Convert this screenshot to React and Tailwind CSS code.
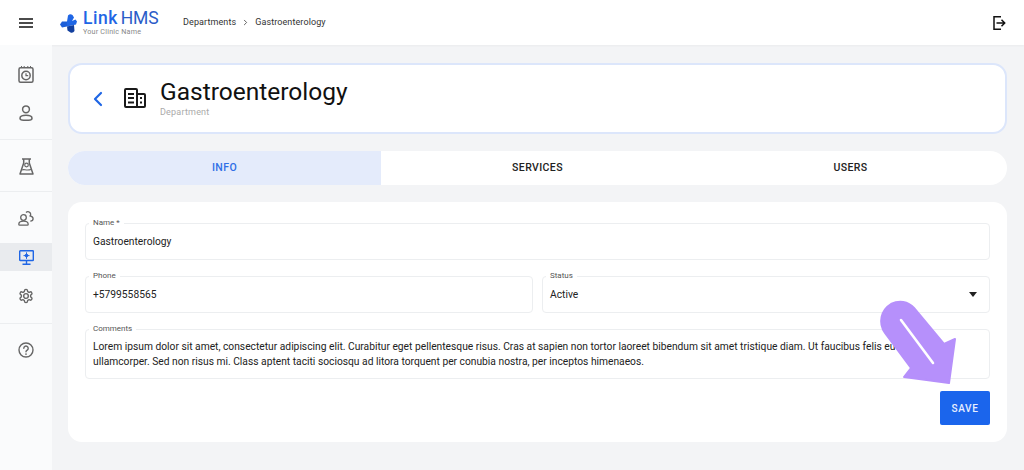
import React from "react";
import { ChevronLeft, ChevronRight } from "lucide-react";

const Logo = () => (
  <svg width="18" height="19" viewBox="0 0 18 19" fill="none">
    <path d="M1 10.500 L3 7.500 L8 7.500 L8 12.500 L3 13.500 Z" fill="#1d5fd8" />
    <path d="M8 7.500 L9 1.500 Q11 -.5 13.500 1 L15 3.500 L13 7 L16.500 5.500 L18 7.500 L17 10.500 L12.500 11.500 L8 12.500 Z" fill="#1f66e5" />
    <path d="M8 12.500 L15 11 L15.500 17 Q14 19.500 11.500 18.500 L8.500 16.500 Z" fill="#123f9e" />
  </svg>
);

const IconMenu = () => (
  <svg width="14" height="10" viewBox="0 0 14 10" stroke="#111" strokeWidth="1.500">
    <path d="M0 1h14M0 5h14M0 9h14" />
  </svg>
);

const IconExit = () => (
  <svg width="13" height="14" viewBox="0 0 13 14" fill="none" stroke="#111" strokeWidth="1.500">
    <path d="M8 .8H1v12.400h7" />
    <path d="M3.500 7h8M8.500 3.800 11.700 7 8.500 10.200" />
  </svg>
);

const IconClock = () => (
  <svg width="16" height="17" viewBox="0 0 16 17" fill="none" stroke="#666" strokeWidth="1.500">
    <rect x="1" y="1.800" width="14" height="14.400" rx="1.500" />
    <circle cx="8" cy="9.500" r="4.200" />
    <path d="M8 7.300v2.400h2.200" strokeWidth="1.200" />
    <path d="M3.500 0v2M6.200 0v2M9.800 0v2M12.500 0v2" strokeWidth="1" />
  </svg>
);

const IconUser = () => (
  <svg width="14" height="16" viewBox="0 0 14 16" fill="none" stroke="#666" strokeWidth="1.500">
    <circle cx="7" cy="4.300" r="3.400" />
    <path d="M4.500 15.200h5c2.300 0 3.500-.8 3.500-2 0-1.800-2.800-3-6-3s-6 1.200-6 3c0 1.200 1.200 2 3.500 2z" />
  </svg>
);

const IconFlask = () => (
  <svg width="15" height="17" viewBox="0 0 15 17" fill="none" stroke="#666" strokeWidth="1.500" strokeLinejoin="round">
    <path d="M3 1h9M4.700 1v4L1 16h13L10.300 5V1" />
    <circle cx="7.500" cy="7" r="1.800" strokeWidth="1.200" />
    <path d="M3 12c2-1.300 4 1 9-.5" strokeWidth="1.200" />
  </svg>
);

const IconPeople = () => (
  <svg width="16" height="16" viewBox="0 0 16 16" fill="none" stroke="#666" strokeWidth="1.300">
    <circle cx="5.500" cy="7.500" r="2.800" />
    <path d="M.8 14.300c0-2.300 2.100-3.100 4.700-3.100s4.700.8 4.700 3.100c0 .5-.3.9-.9.900H1.700c-.6 0-.9-.4-.9-.9z" />
    <path d="M8 2.500a2.800 2.800 0 0 1 4.700 1.600c0 .7-.2 1.200-.6 1.700 1.700.4 3 1.300 3 3 0 1.300-1 2.300-2.800 2.300" />
  </svg>
);

const IconMonitor = () => (
  <svg width="15" height="15" viewBox="0 0 15 15" fill="none" stroke="#1f66e5" strokeWidth="1.400">
    <rect x=".7" y=".7" width="13.600" height="9.800" rx=".6" />
    <path d="M7.500 10.500v3.500M3.500 14.200h8" />
    <circle cx="7.500" cy="5.600" r="1.800" fill="#1f66e5" stroke="none" />
    <path d="M7.500 2.300v6.600M4.500 5.600h6" strokeWidth="1" />
  </svg>
);

const IconGear = () => (
  <svg width="16" height="16" viewBox="0 0 24 24" fill="none" stroke="#666" strokeWidth="2.100" strokeLinejoin="round">
    <path d="M12.200 2h-.4a2 2 0 0 0-2 2v.2a2 2 0 0 1-1 1.700l-.4.300a2 2 0 0 1-2 0l-.2-.1a2 2 0 0 0-2.700.7l-.2.400a2 2 0 0 0 .7 2.700l.2.100a2 2 0 0 1 1 1.700v.6a2 2 0 0 1-1 1.700l-.2.100a2 2 0 0 0-.7 2.700l.2.400a2 2 0 0 0 2.700.7l.2-.1a2 2 0 0 1 2 0l.4.300a2 2 0 0 1 1 1.700v.2a2 2 0 0 0 2 2h.4a2 2 0 0 0 2-2v-.2a2 2 0 0 1 1-1.700l.4-.3a2 2 0 0 1 2 0l.2.100a2 2 0 0 0 2.700-.7l.2-.4a2 2 0 0 0-.7-2.700l-.2-.1a2 2 0 0 1-1-1.700v-.6a2 2 0 0 1 1-1.700l.2-.1a2 2 0 0 0 .7-2.700l-.2-.4a2 2 0 0 0-2.700-.7l-.2.100a2 2 0 0 1-2 0l-.4-.3a2 2 0 0 1-1-1.700V4a2 2 0 0 0-2-2z" />
    <circle cx="12" cy="12" r="3.500" />
  </svg>
);

const IconHelp = () => (
  <svg width="16" height="16" viewBox="0 0 16 16" fill="none" stroke="#666" strokeWidth="1.400" strokeLinecap="round">
    <circle cx="8" cy="8" r="7" />
    <path d="M5.800 6.200a2.200 2.200 0 1 1 3.400 1.900c-.8.500-1.200 1-1.200 1.700" />
    <path d="M8 12v.1" strokeWidth="1.700" />
  </svg>
);

const IconBuilding = () => (
  <svg width="22" height="20" viewBox="0 0 22 20" fill="none" stroke="#1a1a1a" strokeWidth="2">
    <path d="M13 19H2a1 1 0 0 1-1-1V2a1 1 0 0 1 1-1h10a1 1 0 0 1 1 1v17zM13 6h7a1 1 0 0 1 1 1v11a1 1 0 0 1-1 1h-7" />
    <path d="M4 6h6M4 10h6M4 14.500h6M16 10h2M16 14.500h2" strokeWidth="2.200" />
  </svg>
);

const SideItem = ({ children, active }) => (
  <div className={active ? "h-[28px] flex items-center justify-center bg-[#e9ebee]" : "h-[28px] flex items-center justify-center"}>
    {children}
  </div>
);

const Field = ({ label, className, children }) => (
  <div className={`relative border border-[#eceef0] rounded-[4px] px-[7px] ${className}`}>
    <span className="absolute -top-[6px] left-[3px] bg-white px-1 text-[8px] leading-[10px] text-[#555]">{label}</span>
    {children}
  </div>
);

const App = () => {
  return (
    <div className="relative w-[1024px] h-[470px] overflow-hidden bg-[#f3f4f6] font-['Roboto',sans-serif] text-[#222]">
      <header className="h-[45px] bg-white flex items-center shadow-[0_1px_2px_rgba(0,0,0,0.04)]">
        <div className="w-[51px] flex justify-center">
          <IconMenu />
        </div>
        <div className="w-[8px]" />
        <div className="mt-[1px]"><Logo /></div>
        <div className="ml-[6px] w-[100px] flex flex-col">
          <div className="text-[17.500px] leading-[15px] mt-[1px] text-[#1f66e5] whitespace-nowrap">
            <span className="font-medium tracking-[0.5px]">Link</span>
            <span className="ml-[3px] text-[#2a5cc8] tracking-[-0.2px]">HMS</span>
          </div>
          <div className="text-[7.200px] leading-[8px] mt-[2px] text-[#888] tracking-[0.2px] whitespace-nowrap">Your Clinic Name</div>
        </div>
        <nav className="flex items-center text-[9px] text-[#333] tracking-[0.1px]">
          <span>Departments</span>
          <ChevronRight size={9} className="mx-[5px]" />
          <span>Gastroenterology</span>
        </nav>
        <div className="ml-auto mr-[18px]">
          <IconExit />
        </div>
      </header>

      <div className="flex h-[425px]">
        <aside className="w-[52px] bg-[#fafbfc] flex flex-col">
          <div className="h-[95px] pt-[15px] flex flex-col gap-[11px] border-b border-[#eceef0]">
            <SideItem><IconClock /></SideItem>
            <SideItem><IconUser /></SideItem>
          </div>
          <div className="h-[52px] pt-[12px] border-b border-[#eceef0]">
            <SideItem><IconFlask /></SideItem>
          </div>
          <div className="h-[132px] pt-[12px] flex flex-col gap-[11px] border-b border-[#eceef0]">
            <SideItem><IconPeople /></SideItem>
            <SideItem active><IconMonitor /></SideItem>
            <SideItem><IconGear /></SideItem>
          </div>
          <div className="pt-[12px]">
            <SideItem><IconHelp /></SideItem>
          </div>
        </aside>

        <main className="flex-1 pl-[16px] pr-[17px] pt-[18px]">
          <div className="h-[71px] bg-white border-2 border-[#dce6fb] rounded-[14px] flex items-center">
            <ChevronLeft size={24} color="#1f66e5" strokeWidth={2.200} className="ml-[16px]" />
            <div className="ml-[14px] mt-[-1px]"><IconBuilding /></div>
            <div className="ml-[14px] -mt-[3px]">
              <div className="text-[24.500px] leading-[30px] text-[#111]">Gastroenterology</div>
              <div className="text-[9px] leading-[10px] text-[#aaa] tracking-[0.2px]">Department</div>
            </div>
          </div>

          <div className="mt-[17px] h-[34px] flex rounded-[17px] overflow-hidden bg-white text-[10.500px] font-medium tracking-[0.4px]">
            <div className="flex-1 flex items-center justify-center bg-[#e4ebfb] text-[#2f6fe6]">INFO</div>
            <div className="flex-1 flex items-center justify-center text-[#222]">SERVICES</div>
            <div className="flex-1 flex items-center justify-center text-[#222]">USERS</div>
          </div>

          <div className="mt-[17px] h-[240px] bg-white rounded-[14px] px-[17px] pt-[21px] pb-[17px] flex flex-col">
            <Field label="Name *" className="h-[37px] pt-[1px] flex items-center text-[10.250px]">
              Gastroenterology
            </Field>
            <div className="mt-[16px] flex gap-[9px]">
              <Field label="Phone" className="flex-1 h-[37px] pt-[1px] flex items-center text-[10.250px]">
                +5799558565
              </Field>
              <Field label="Status" className="flex-1 h-[37px] pt-[1px] flex items-center justify-between text-[10.250px]">
                Active
                <span className="mr-[5px] w-0 h-0 border-l-[4.500px] border-r-[4.500px] border-t-[5px] border-l-transparent border-r-transparent border-t-[#222]" />
              </Field>
            </div>
            <Field label="Comments" className="mt-[16px] h-[51px] pt-[9px] text-[10.250px] leading-[15px]">
              Lorem ipsum dolor sit amet, consectetur adipiscing elit. Curabitur eget pellentesque risus. Cras at sapien non tortor laoreet bibendum sit amet tristique diam. Ut faucibus felis eu orci
              <br />
              ullamcorper. Sed non risus mi. Class aptent taciti sociosqu ad litora torquent per conubia nostra, per inceptos himenaeos.
            </Field>
            <div className="mt-[12px] flex justify-end">
              <button className="w-[50px] h-[34px] bg-[#1b65ec] text-[#e8efff] rounded-[2px] text-[10px] font-medium tracking-[0.6px]">SAVE</button>
            </div>
          </div>
        </main>
      </div>

      <svg className="absolute left-0 top-0 pointer-events-none" width="1024" height="470" viewBox="0 0 1024 470">
        <path
          d="M891 304 C899 300 908 301 914 308 L944 344 L955 339 L949 383 L904 377 L911 368 L885 333 C878 323 881 310 891 304 Z"
          fill="#b690fb"
          stroke="#b690fb"
          strokeWidth="2"
          strokeLinejoin="round"
        />
        <path d="M901 320 L933 363" stroke="#ffffff" strokeWidth="2.600" strokeLinecap="round" />
      </svg>
    </div>
  );
};

export default App;
